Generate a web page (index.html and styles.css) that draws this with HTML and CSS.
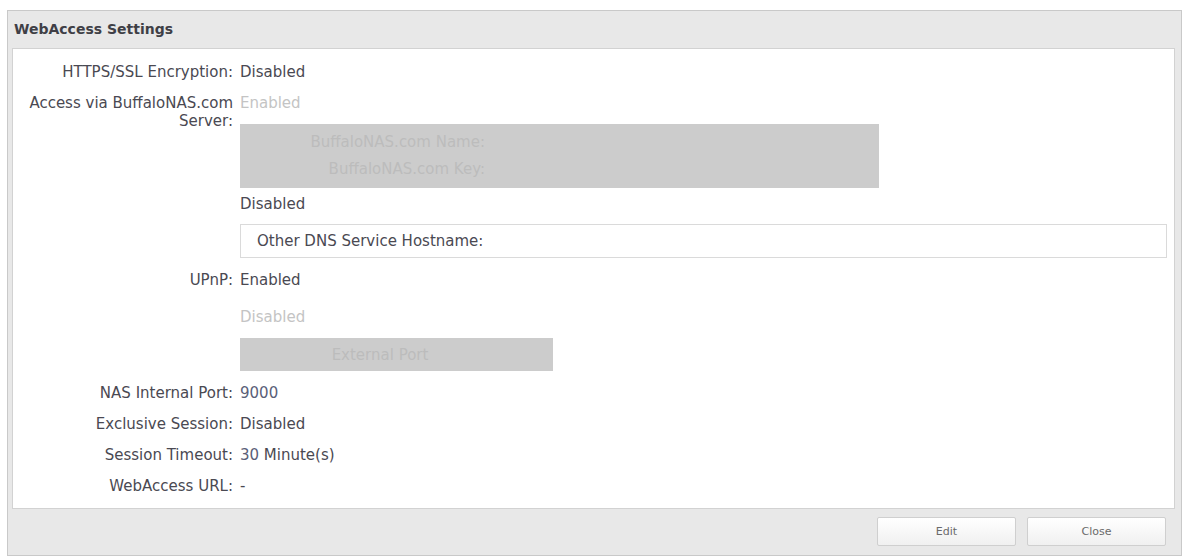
FILE: index.html
```html
<!DOCTYPE html>
<html lang="en">
<head>
<meta charset="utf-8">
<title>WebAccess Settings</title>
<link rel="stylesheet" href="styles.css">
</head>
<body>
<div class="panel">
  <div class="panel-header">WebAccess Settings</div>
  <div class="panel-body">
    <div class="row">
      <div class="label">HTTPS/SSL Encryption:</div>
      <div class="value">Disabled</div>
    </div>
    <div class="row">
      <div class="label">Access via BuffaloNAS.com Server:</div>
      <div class="value stack">
        <div class="faint">Enabled</div>
        <div class="disabled-box box-large">
          <div class="faint-box-text">BuffaloNAS.com Name:</div>
          <div class="faint-box-text">BuffaloNAS.com Key:</div>
        </div>
        <div class="after-box">Disabled</div>
        <div class="field">Other DNS Service Hostname:</div>
      </div>
    </div>
    <div class="row">
      <div class="label">UPnP:</div>
      <div class="value stack">
        <div>Enabled</div>
        <div class="faint upnp-disabled">Disabled</div>
        <div class="disabled-box box-small">
          <div class="faint-box-text">External Port</div>
        </div>
      </div>
    </div>
    <div class="row">
      <div class="label">NAS Internal Port:</div>
      <div class="value num">9000</div>
    </div>
    <div class="row">
      <div class="label">Exclusive Session:</div>
      <div class="value">Disabled</div>
    </div>
    <div class="row">
      <div class="label">Session Timeout:</div>
      <div class="value"><span class="num">30</span> Minute(s)</div>
    </div>
    <div class="row">
      <div class="label">WebAccess URL:</div>
      <div class="value">-</div>
    </div>
  </div>
  <div class="panel-footer">
    <button class="btn">Edit</button>
    <button class="btn">Close</button>
  </div>
</div>
</body>
</html>
```
FILE: styles.css
```css
html, body {
  margin: 0;
  padding: 0;
  background: #ffffff;
}
body {
  padding: 10px 3px 3px 7px;
  font-family: "DejaVu Sans", "Liberation Sans", sans-serif;
  font-size: 15px;
  color: #4a4952;
}
.panel {
  border: 1px solid #c9c9c9;
  background: #e8e8e8;
  height: 546px;
  box-sizing: border-box;
  display: flex;
  flex-direction: column;
}
.panel-header {
  height: 37px;
  line-height: 37px;
  padding-left: 6px;
  font-weight: bold;
  font-size: 14px;
  color: #3f3f46;
  flex: none;
}
.panel-body {
  margin: 0 6px 0 4px;
  background: #ffffff;
  border: 1px solid #d2d2d2;
  padding: 14px 0 13px;
  display: flex;
  flex-direction: column;
  gap: 13px;
  flex: none;
}
.row {
  display: flex;
  gap: 7px;
  line-height: 18px;
}
.label {
  width: 220px;
  flex: none;
  text-align: right;
}
.value {
  flex: 1;
  padding-right: 7px;
}
.stack {
  display: flex;
  flex-direction: column;
}
.faint {
  color: #c4c4c4;
}
.disabled-box {
  background: #cccccc;
  display: flex;
  flex-direction: column;
  box-sizing: border-box;
}
.box-large {
  width: 639px;
  height: 64px;
  margin-top: 12px;
  padding: 5px 0 0;
  align-items: flex-start;
}
.box-large .faint-box-text {
  width: 245px;
  text-align: right;
  line-height: 27px;
}
.box-small {
  width: 313px;
  height: 33px;
  margin-top: 12px;
  align-items: center;
  justify-content: center;
  padding-right: 33px;
}
.faint-box-text {
  color: #bcbcbc;
}
.after-box {
  margin-top: 7px;
}
.field {
  margin-top: 11px;
  height: 34px;
  box-sizing: border-box;
  border: 1px solid #dadada;
  padding-left: 16px;
  display: flex;
  align-items: center;
}
.upnp-disabled {
  margin-top: 19px;
}
.num {
  color: #5a6078;
}
.panel-footer {
  flex: 1;
  display: flex;
  justify-content: flex-end;
  align-items: flex-start;
  gap: 11px;
  padding: 8px 15px 0 0;
}
.btn {
  width: 139px;
  height: 29px;
  border: 1px solid #cfcfcf;
  border-radius: 2px;
  background: linear-gradient(#ffffff, #f0f0f0);
  font-family: "DejaVu Sans", "Liberation Sans", sans-serif;
  font-size: 11px;
  color: #6a6a6a;
  padding: 0;
}
```
